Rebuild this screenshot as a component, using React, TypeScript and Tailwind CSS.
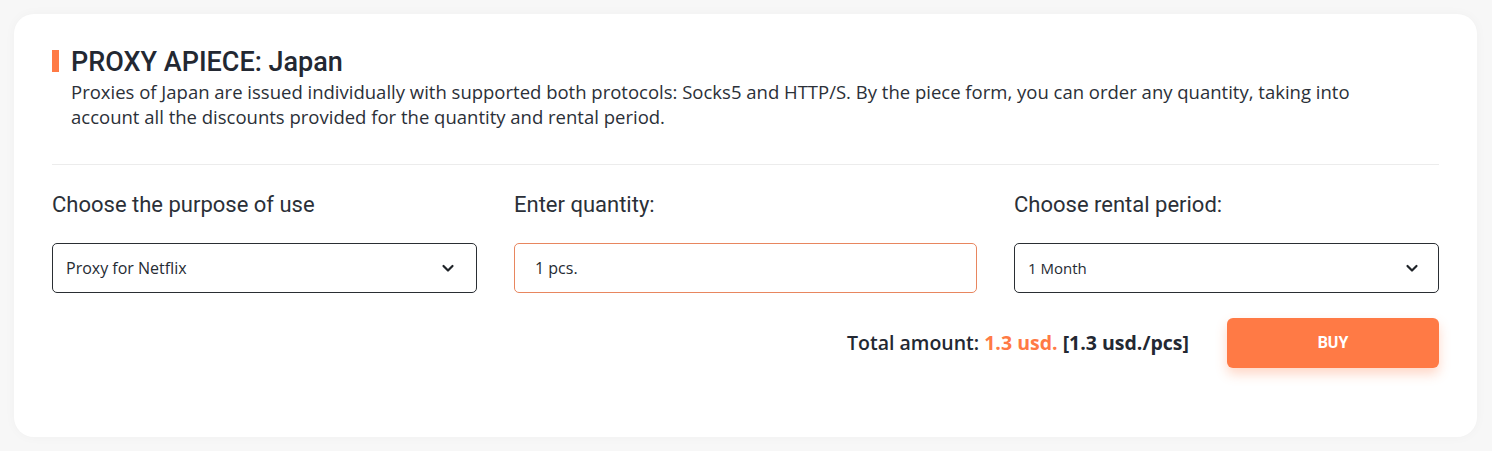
import React from "react";

function Chevron() {
  return (
    <svg width="14" height="14" viewBox="0 0 14 14" fill="none" className="shrink-0">
      <path d="M2.5 5l4.5 4.5L11.5 5" stroke="#1f2328" strokeWidth="2.2" strokeLinecap="round" strokeLinejoin="round" />
    </svg>
  );
}

const open = { fontFamily: "'Open Sans', 'Noto Sans', sans-serif" };

export default function App() {
  return (
    <div className="min-h-[451px] w-full bg-[#f7f7f7] p-[14px] pr-[15px]" style={{ fontFamily: "Roboto, 'Noto Sans', sans-serif" }}>
      <div className="h-[423px] rounded-[20px] bg-white px-[38px] pt-[31px] shadow-[0_0_12px_rgba(0,0,0,0.03)] text-[#262b33]">
        <div className="flex items-start gap-[12px]">
          <div className="mt-[5px] h-[22px] w-[7px] bg-[#ff7a45]" />
          <div>
            <h1 className="text-[27px] font-medium leading-[34px] text-[#232832]">PROXY APIECE: Japan</h1>
            <p className="max-w-[1310px] text-[18.5px] leading-[25px] text-[#2b3038]" style={open}>
              Proxies of Japan are issued individually with supported both protocols: Socks5 and HTTP/S. By the piece form, you can order any quantity, taking into account all the discounts provided for the quantity and rental period.
            </p>
          </div>
        </div>
        <div className="mt-[35px] h-px bg-[#ececec]" />
        <div className="mt-[26px] grid grid-cols-[425px_463px_425px] gap-x-[37px]">
          <div>
            <div className="text-[22px] leading-[28px] text-[#2b3038]">Choose the purpose of use</div>
            <div className="mt-[24px] flex h-[50px] items-center justify-between rounded-[5px] border border-[#2a2e33] pl-[13px] pr-[21px] text-[16px]" style={open}>
              <span>Proxy for Netflix</span>
              <Chevron />
            </div>
          </div>
          <div>
            <div className="text-[22px] leading-[28px] text-[#2b3038]">Enter quantity:</div>
            <div className="mt-[24px] flex h-[50px] items-center rounded-[5px] border border-[#e8865f] pl-[20px] text-[16px]" style={open}>
              1 pcs.
            </div>
          </div>
          <div>
            <div className="text-[22px] leading-[28px] text-[#2b3038]">Choose rental period:</div>
            <div className="mt-[24px] flex h-[50px] items-center justify-between rounded-[5px] border border-[#2a2e33] pl-[13px] pr-[19px] text-[15px]" style={open}>
              <span>1 Month</span>
              <Chevron />
            </div>
          </div>
        </div>
        <div className="mt-[25px] flex items-center justify-end gap-[38px]">
          <div className="text-[19.5px] font-semibold text-[#232832]" style={open}>
            Total amount: <span className="font-bold text-[#ff7a45]">1.3 usd.</span> <span className="font-bold">[1.3 usd./pcs]</span>
          </div>
          <button className="h-[50px] w-[212px] rounded-[6px] bg-[#ff7a45] text-[16px] font-bold text-white shadow-[0_6px_12px_rgba(255,122,69,0.3)]">
            BUY
          </button>
        </div>
      </div>
    </div>
  );
}
